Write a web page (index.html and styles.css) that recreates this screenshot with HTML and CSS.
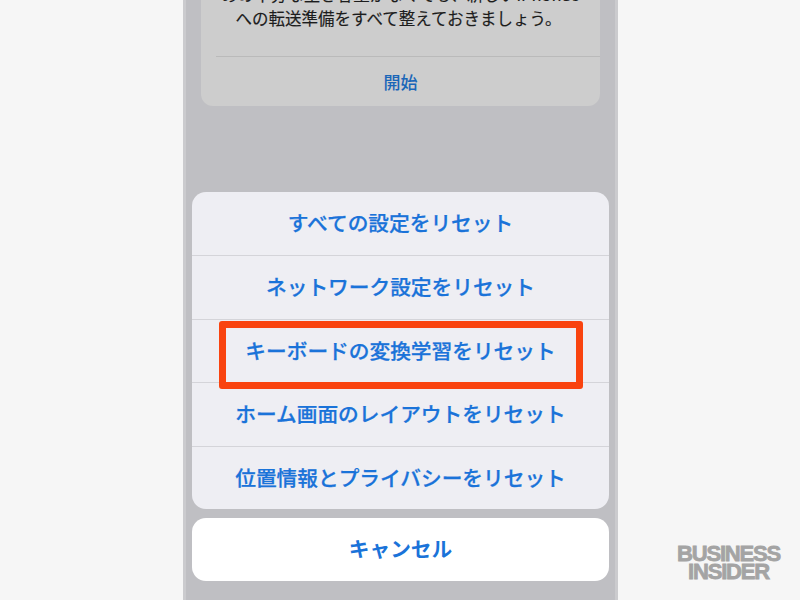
FILE: index.html
```html
<!DOCTYPE html>
<html lang="ja">
<head>
<meta charset="utf-8">
<title>リセット</title>
<link rel="stylesheet" href="styles.css">
</head>
<body>
<main class="phone">
  <section class="card">
    <p class="card-text cut">めの十分な空き容量がなくても、新しいiPhone6</p>
    <p class="card-text">への転送準備をすべて整えておきましょう。</p>
    <div class="card-action">開始</div>
  </section>
  <p class="peek">リセット</p>
  <section class="sheet">
    <div class="option">すべての設定をリセット</div>
    <div class="option">ネットワーク設定をリセット</div>
    <div class="option highlighted">キーボードの変換学習をリセット</div>
    <div class="option">ホーム画面のレイアウトをリセット</div>
    <div class="option">位置情報とプライバシーをリセット</div>
  </section>
  <div class="cancel">キャンセル</div>
</main>
<div class="brand">BUSINESS<br>INSIDER</div>
</body>
</html>
```
FILE: styles.css
```css
* { box-sizing: border-box; }
html, body { margin: 0; height: 100%; }
body {
  width: 800px;
  height: 600px;
  overflow: hidden;
  background: #f6f6f6;
  font-family: "Noto Sans CJK JP", "Liberation Sans", sans-serif;
  position: relative;
}
.phone {
  position: absolute;
  left: 183px;
  top: 0;
  width: 435px;
  height: 600px;
  background: #bfbfc3;
  box-shadow: inset 3px 0 0 #cbcbce, inset -3px 0 0 #cbcbce;
  overflow: hidden;
  padding: 0 9px;
}
.card {
  position: relative;
  margin: 0 9px;
  height: 106px;
  background: #cdcdcd;
  border-radius: 0 0 12px 12px;
  overflow: hidden;
  text-align: center;
}
.card-text {
  margin: 0;
  padding-right: 4px;
  font-size: 16.5px;
  line-height: 26px;
  color: #1c1c1c;
  -webkit-text-stroke: 0.15px #1c1c1c;
  white-space: nowrap;
}
.card-text.cut { margin-top: -17px; line-height: 22px; padding-right: 0; }
.card-action {
  margin: 25px 0 0 15px;
  border-top: 1px solid #bababa;
  height: 52px;
  line-height: 49px;
  font-size: 17px;
  font-weight: 500;
  color: #1a66b8;
  padding-right: 15px;
}
.peek {
  position: absolute;
  left: 40px;
  top: 509px;
  height: 3px;
  overflow: hidden;
  margin: 0;
  font-size: 16px;
  line-height: 18px;
  color: #1a5ea8;
}
.sheet {
  position: relative;
  margin-top: 86px;
  height: 317px;
  background: #eeeef3;
  border-radius: 14px;
  overflow: hidden;
}
.option {
  height: 63.5px;
  line-height: 61px;
  text-align: center;
  font-size: 20.7px;
  font-weight: 500;
  color: #1a73d9;
  -webkit-text-stroke: 0.25px #1a73d9;
  border-top: 1px solid #d4d4d9;
  white-space: nowrap;
}
.option:first-child { border-top: 0; height: 63px; }
.highlighted { position: relative; }
.highlighted::after {
  content: "";
  position: absolute;
  left: 27px;
  right: 26px;
  top: 1px;
  bottom: -7px;
  border: 7px solid #f9430f;
  border-radius: 3px;
}
.cancel {
  margin-top: 9px;
  height: 63px;
  line-height: 61px;
  background: #fff;
  border-radius: 14px;
  text-align: center;
  font-size: 20.7px;
  font-weight: 700;
  color: #1a73d9;
}
.brand {
  position: absolute;
  left: 667px;
  top: 545px;
  width: 123px;
  font-family: "Liberation Sans", sans-serif;
  font-size: 22px;
  line-height: 18px;
  font-weight: 700;
  letter-spacing: -1.2px;
  color: #a4a4a4;
  text-align: center;
  -webkit-text-stroke: 0.8px #a4a4a4;
}
```
